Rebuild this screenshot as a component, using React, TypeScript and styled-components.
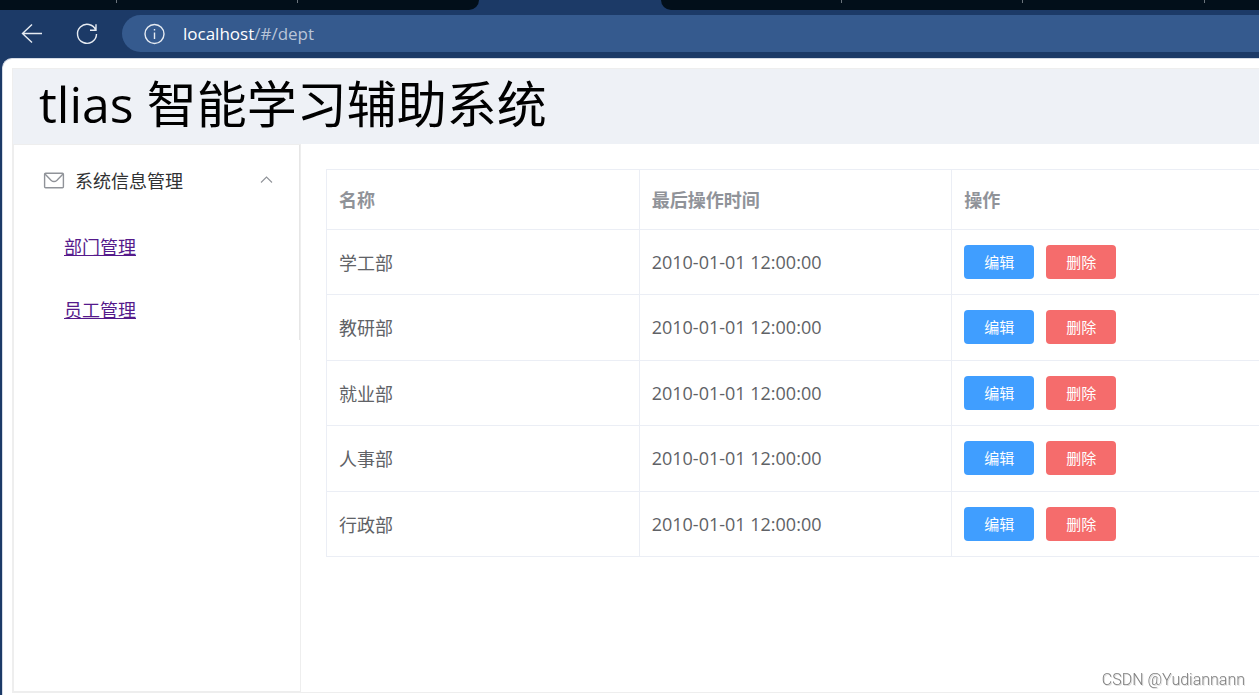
import React from "react";
import styled, { createGlobalStyle } from "styled-components";

const GlobalStyle = createGlobalStyle`
  * { box-sizing: border-box; }
  body {
    margin: 0;
    background: #1c3a67;
    font-family: "Open Sans", "Noto Sans CJK SC", sans-serif;
    font-size: 18px;
    color: #303133;
  }
`;

const Window = styled.div`
  display: flex;
  flex-direction: column;
  min-height: 100vh;
  overflow: hidden;
`;

const TabStrip = styled.div`
  display: flex;
  height: 10px;
`;

const TabGroup = styled.div<{ $side: "left" | "right" }>`
  display: flex;
  flex: ${(p) => (p.$side === "left" ? "none" : "1")};
  background: #020f1a;
  border-radius: ${(p) => (p.$side === "left" ? "0 0 10px 0" : "0 0 0 10px")};
`;

const Tab = styled.div<{ $width: number; $divided?: boolean }>`
  flex: none;
  width: ${(p) => p.$width}px;
  height: 3px;
  border-right: ${(p) => (p.$divided ? "1px solid #6b747c" : "none")};
`;

const ActiveTab = styled.div`
  width: 182px;
`;

const Toolbar = styled.div`
  display: flex;
  align-items: center;
  height: 48px;
  padding: 5px 0 6px 20px;
`;

const ToolButton = styled.button`
  display: flex;
  width: 24px;
  height: 24px;
  margin-right: 31px;
  padding: 0;
  border: 0;
  background: none;
  color: #e6ebf2;
`;

const AddressBar = styled.div`
  display: flex;
  flex: 1;
  align-items: center;
  gap: 18px;
  height: 37px;
  margin-left: -8px;
  padding-left: 21px;
  border-radius: 19px 0 0 19px;
  background: #355a8e;
  color: #e6ebf2;
`;

const Address = styled.div`
  font-size: 17px;
  line-height: 24px;
  color: #b9c5d8;
`;

const Host = styled.span`
  color: #fff;
`;

const Page = styled.div`
  display: flex;
  flex: 1;
  flex-direction: column;
  margin-left: 2px;
  padding: 9px 0 2px 9px;
  border-top: 1px solid #d5dbe5;
  border-left: 1px solid #d5dbe5;
  border-radius: 10px 0 0 0;
  background: #fff;
`;

const Container = styled.div`
  display: flex;
  flex: 1;
  flex-direction: column;
  border: 1px solid #eee;
  border-right: 0;
`;

const Header = styled.header`
  height: 75px;
  padding-left: 26px;
  background: #eef1f6;
`;

const Title = styled.h1`
  margin: 0;
  font-size: 50px;
  font-weight: 400;
  line-height: 70px;
  color: #000;
  white-space: nowrap;
`;

const Body = styled.div`
  display: flex;
  flex: 1;
`;

const Aside = styled.aside`
  flex: none;
  width: 288px;
  border: 1px solid #eee;
`;

const Menu = styled.nav`
  border-right: 1px solid #e6e6e6;
`;

const MenuTitle = styled.button`
  display: flex;
  align-items: center;
  width: 100%;
  height: 69px;
  padding: 0 26px 0 29px;
  border: 0;
  background: none;
  font: inherit;
  color: #303133;
`;

const MenuLabel = styled.span`
  flex: 1;
  padding-left: 10px;
  text-align: left;
`;

const MenuList = styled.ul`
  margin: 0;
  padding: 0;
  list-style: none;
`;

const MenuItem = styled.li`
  height: 63px;
  padding-left: 50px;
  line-height: 67px;
`;

const MenuLink = styled.a`
  color: #551a8b;
  text-decoration: underline;
`;

const Main = styled.main`
  flex: 1;
  min-width: 0;
  padding: 25px 0 25px 25px;
`;

const Table = styled.table`
  width: 100%;
  table-layout: fixed;
  border-collapse: separate;
  border-spacing: 0;
  border-top: 1px solid #ebeef5;
  border-left: 1px solid #ebeef5;
  color: #606266;
`;

const HeadCell = styled.th<{ $wide?: boolean }>`
  width: ${(p) => (p.$wide ? "auto" : "33.55%")};
  height: 60px;
  padding: 0 12px 2px;
  border-bottom: 1px solid #ebeef5;
  border-right: ${(p) => (p.$wide ? "0" : "1px solid #ebeef5")};
  text-align: left;
  font-weight: 700;
  color: #909399;
`;

const Row = styled.tr`
  height: 65px;
  &:nth-child(even) {
    height: 66px;
  }
`;

const Cell = styled.td<{ $wide?: boolean }>`
  padding: 0 12px 1px;
  border-bottom: 1px solid #ebeef5;
  border-right: ${(p) => (p.$wide ? "0" : "1px solid #ebeef5")};
`;

const Actions = styled.div`
  display: flex;
  gap: 12px;
`;

const ActionButton = styled.button<{ $danger?: boolean }>`
  width: 70px;
  height: 34px;
  padding: 0;
  border: 0;
  border-radius: 4px;
  background: ${(p) => (p.$danger ? "#f56c6c" : "#409eff")};
  font-family: inherit;
  font-size: 15px;
  line-height: 34px;
  color: #fff;
`;

const Watermark = styled.div`
  position: fixed;
  right: 14px;
  bottom: 3px;
  font-family: Roboto, sans-serif;
  font-size: 16px;
  font-weight: 300;
  line-height: 24px;
  color: #808080;
  text-shadow: 1px 1px 0 #ddd;
`;

const departments = ["学工部", "教研部", "就业部", "人事部", "行政部"];

const BackIcon = () => (
  <svg width="24" height="24" viewBox="0 0 24 24" fill="none" stroke="currentColor" strokeWidth="1.4">
    <path d="M22 11.5H2.5M12 2.5L2.5 11.5L12 20.5" />
  </svg>
);

const ReloadIcon = () => (
  <svg width="24" height="24" viewBox="0 0 24 24" fill="none" stroke="currentColor" strokeWidth="1.4">
    <path d="M20.8 8.2A9.5 9.5 0 1 0 21.5 12M21 2.2V8.2H15" />
  </svg>
);

const InfoIcon = () => (
  <svg width="22" height="22" viewBox="0 0 22 22" fill="none" stroke="currentColor" strokeWidth="1.4">
    <circle cx="11.5" cy="11" r="9.5" />
    <path d="M11.5 9.5V16M11.5 6V7.6" />
  </svg>
);

const MailIcon = () => (
  <svg width="22" height="18" viewBox="0 0 22 18" fill="none" stroke="#909399" strokeWidth="1.4">
    <rect x="1.6" y="2.2" width="18.8" height="14.6" rx="1" />
    <path d="M2 3L8 9.2Q11 12 14 9.2L20 3" />
  </svg>
);

const ArrowIcon = () => (
  <svg width="13" height="8" viewBox="0 0 13 8" fill="none" stroke="#909399" strokeWidth="1.1">
    <path d="M1 6.5L6.5 1L12 6.5" />
  </svg>
);

export default function App() {
  return (
    <Window>
      <GlobalStyle />
      <TabStrip>
        <TabGroup $side="left">
          <Tab $width={117} $divided />
          <Tab $width={181} $divided />
          <Tab $width={181} />
        </TabGroup>
        <ActiveTab />
        <TabGroup $side="right">
          <Tab $width={181} $divided />
          <Tab $width={181} $divided />
          <Tab $width={182} $divided />
        </TabGroup>
      </TabStrip>
      <Toolbar>
        <ToolButton aria-label="Back"><BackIcon /></ToolButton>
        <ToolButton aria-label="Reload"><ReloadIcon /></ToolButton>
        <AddressBar>
          <InfoIcon />
          <Address role="textbox" aria-label="Address"><Host>localhost</Host>/#/dept</Address>
        </AddressBar>
      </Toolbar>
      <Page>
        <Container>
          <Header>
            <Title>tlias 智能学习辅助系统</Title>
          </Header>
          <Body>
            <Aside>
              <Menu>
                <MenuTitle aria-expanded="true">
                  <MailIcon />
                  <MenuLabel>系统信息管理</MenuLabel>
                  <ArrowIcon />
                </MenuTitle>
                <MenuList>
                  <MenuItem><MenuLink href="#/dept">部门管理</MenuLink></MenuItem>
                  <MenuItem><MenuLink href="#/emp">员工管理</MenuLink></MenuItem>
                </MenuList>
              </Menu>
            </Aside>
            <Main>
              <Table>
                <thead>
                  <tr>
                    <HeadCell>名称</HeadCell>
                    <HeadCell>最后操作时间</HeadCell>
                    <HeadCell $wide>操作</HeadCell>
                  </tr>
                </thead>
                <tbody>
                  {departments.map((name) => (
                    <Row key={name}>
                      <Cell>{name}</Cell>
                      <Cell>2010-01-01 12:00:00</Cell>
                      <Cell $wide>
                        <Actions>
                          <ActionButton>编辑</ActionButton>
                          <ActionButton $danger>删除</ActionButton>
                        </Actions>
                      </Cell>
                    </Row>
                  ))}
                </tbody>
              </Table>
            </Main>
          </Body>
        </Container>
      </Page>
      <Watermark>CSDN @Yudiannann</Watermark>
    </Window>
  );
}
